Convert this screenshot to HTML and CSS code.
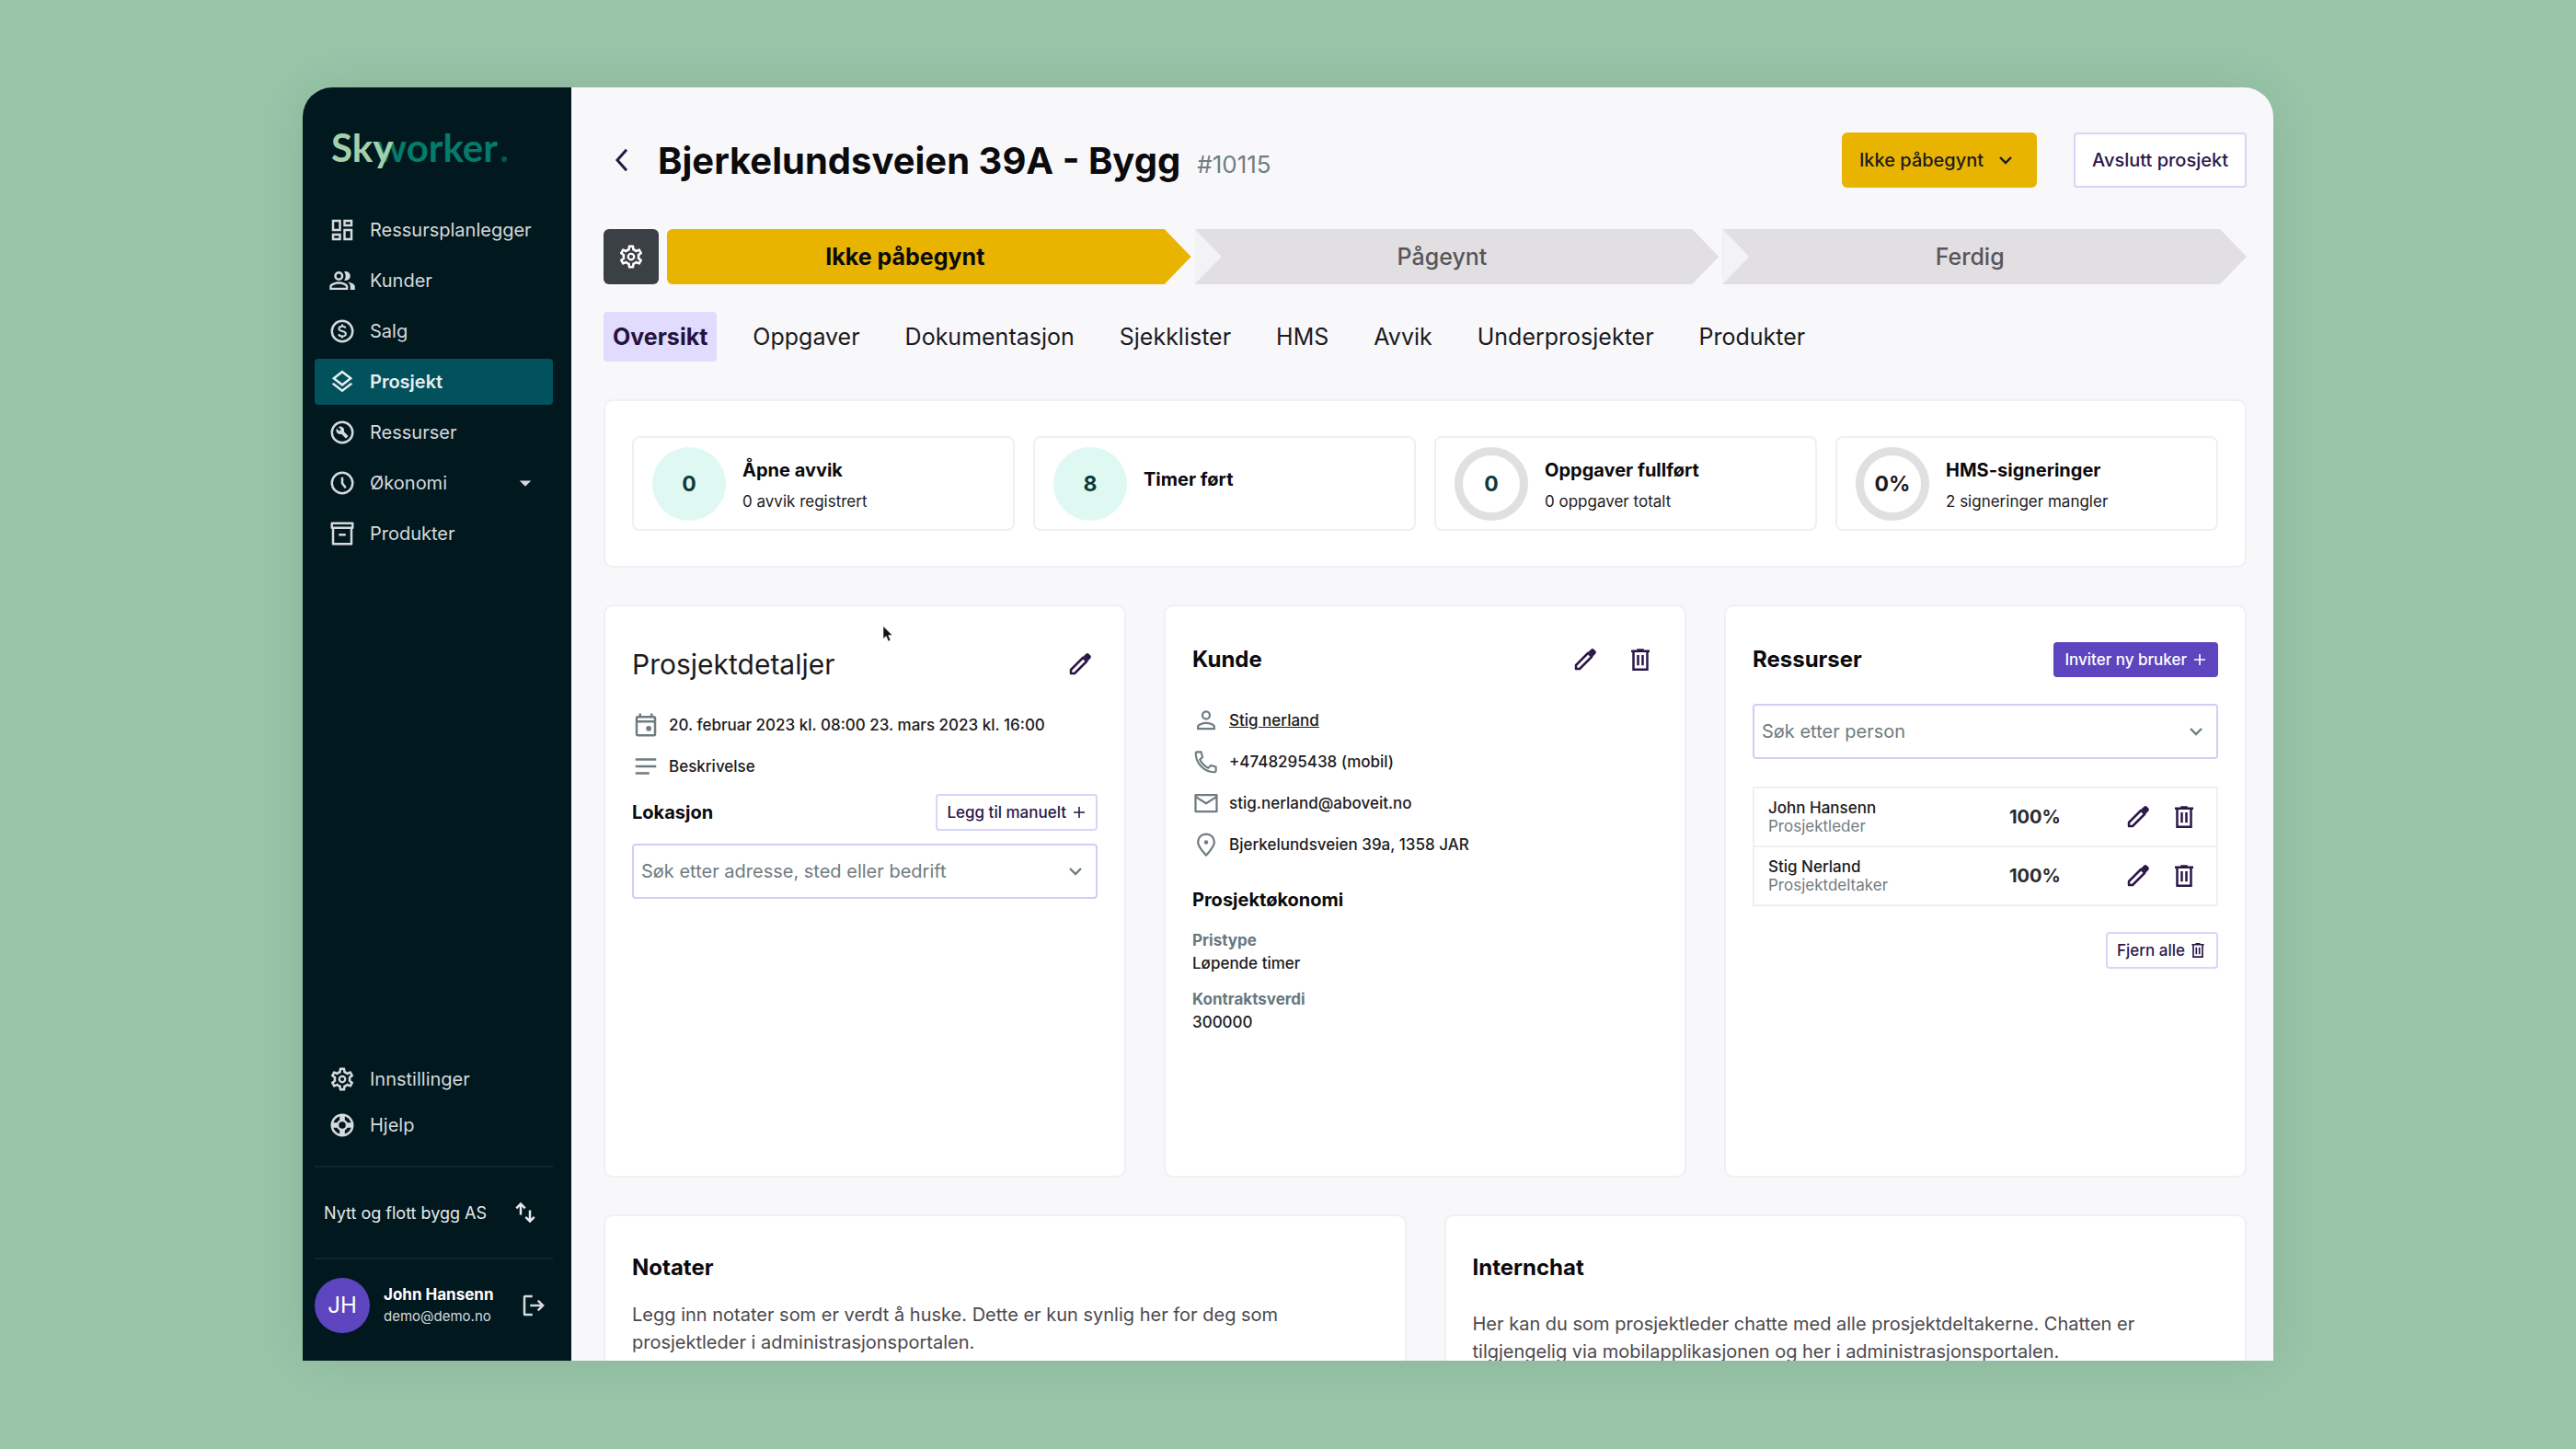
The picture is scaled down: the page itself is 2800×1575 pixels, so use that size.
FILE: index.html
```html
<!DOCTYPE html>
<html lang="no">
<head>
    <meta charset="UTF-8">
    <meta name="viewport" content="width=device-width, initial-scale=1.0">
    <title>Skyworker</title>
    <link rel="stylesheet" href="styles.css">
</head>
<body>
    <!-- Icon sprite -->
    <svg class="sprite" xmlns="http://www.w3.org/2000/svg">
        <symbol id="i-dashboard" viewBox="0 0 24 24"><path d="M19 5v2h-4V5h4M9 5v6H5V5h4m10 8v6h-4v-6h4M9 17v2H5v-2h4M21 3h-8v6h8V3zM11 3H3v10h8V3zm10 8h-8v10h8V11zm-10 4H3v6h8v-6z"/></symbol>
        <symbol id="i-people" viewBox="0 0 24 24"><path d="M9 4a4 4 0 1 0 0 8 4 4 0 0 0 0-8zm0 2a2 2 0 1 1 0 4 2 2 0 0 1 0-4zM9 13c-2.670 0-8 1.340-8 4v3h16v-3c0-2.660-5.330-4-8-4zm0 1.900c2.970 0 6.100 1.460 6.100 2.100v1.100H2.900V17c0-.64 3.130-2.100 6.100-2.100zM15 4c-.47 0-.91.08-1.330.23A5.950 5.950 0 0 1 15 8c0 1.430-.5 2.740-1.330 3.770.42.15.86.23 1.330.23a4 4 0 0 0 0-8zm1.670 9.130C18.040 14.060 19 15.320 19 17v3h4v-3c0-2.180-3.570-3.470-6.330-3.870z"/></symbol>
        <symbol id="i-dollar" viewBox="0 0 24 24"><g fill="none" stroke="currentColor" stroke-width="2"><circle cx="12" cy="12" r="9"/><path d="M15 9.200C14.500 8.200 13.400 7.700 12 7.700c-1.700 0-2.900.8-2.900 2.100 0 3 6 1.400 6 4.400 0 1.300-1.300 2.200-3.100 2.200-1.500 0-2.700-.6-3.200-1.800M12 6v2M12 16v2" stroke-width="1.600"/></g></symbol>
        <symbol id="i-layers" viewBox="0 0 24 24"><path d="M11.990 18.540l-7.370-5.730L3 14.070l9 7 9-7-1.630-1.270zM12 16l7.360-5.730L21 9l-9-7-9 7 1.630 1.270L12 16zm0-11.470L17.740 9 12 13.470 6.260 9 12 4.530z"/></symbol>
        <symbol id="i-wrench" viewBox="0 0 24 24"><circle cx="12" cy="12" r="9" fill="none" stroke="currentColor" stroke-width="2"/><path d="M13.490 11.380c.43-1.220.17-2.640-.81-3.620-1.110-1.110-2.790-1.300-4.100-.59l2.350 2.350-1.410 1.410-2.350-2.350c-.71 1.320-.52 2.990.59 4.100.98.98 2.400 1.240 3.620.81l3.410 3.410c.2.2.51.2.71 0l1.400-1.400c.2-.2.2-.51 0-.71l-3.410-3.410z"/></symbol>
        <symbol id="i-clock" viewBox="0 0 24 24"><g fill="none" stroke="currentColor" stroke-width="2"><circle cx="12" cy="12" r="9"/><path d="M12 7v5.200l3 4"/></g></symbol>
        <symbol id="i-box" viewBox="0 0 24 24"><g fill="none" stroke="currentColor" stroke-width="2" stroke-linejoin="round"><path d="M3 3h18v4H3zM4 7v14h16V7M9 13h6"/></g></symbol>
        <symbol id="i-gear" viewBox="0 0 24 24"><path d="M19.430 12.980c.04-.32.07-.64.07-.98 0-.34-.03-.66-.07-.98l2.110-1.650c.19-.15.24-.42.12-.64l-2-3.460c-.09-.16-.26-.25-.44-.25-.06 0-.12.01-.17.03l-2.490 1c-.52-.4-1.080-.73-1.690-.98l-.38-2.650C14.460 2.180 14.250 2 14 2h-4c-.25 0-.46.18-.49.42l-.38 2.650c-.61.25-1.170.59-1.690.98l-2.490-1c-.06-.02-.12-.03-.18-.03-.17 0-.34.09-.43.25l-2 3.460c-.13.22-.07.49.12.64l2.110 1.650c-.04.32-.07.65-.07.98 0 .33.03.66.07.98l-2.110 1.650c-.19.15-.24.42-.12.64l2 3.460c.09.16.26.25.44.25.06 0 .12-.01.17-.03l2.490-1c.52.4 1.080.73 1.690.98l.38 2.650c.03.24.24.42.49.42h4c.25 0 .46-.18.49-.42l.38-2.650c.61-.25 1.170-.59 1.690-.98l2.490 1c.06.02.12.03.18.03.17 0 .34-.09.43-.25l2-3.460c.12-.22.07-.49-.12-.64l-2.110-1.650zm-1.980-1.710c.04.31.05.52.05.73 0 .21-.02.43-.05.73l-.14 1.130.89.7 1.080.84-.7 1.210-1.270-.51-1.040-.42-.9.68c-.43.32-.84.56-1.250.73l-1.060.43-.16 1.130-.2 1.350h-1.400l-.19-1.350-.16-1.130-1.060-.43c-.43-.18-.83-.41-1.230-.71l-.91-.7-1.060.43-1.270.51-.7-1.210 1.080-.84.89-.7-.14-1.130c-.03-.31-.05-.54-.05-.74s.02-.43.05-.73l.14-1.130-.89-.7-1.080-.84.7-1.210 1.270.51 1.040.42.9-.68c.43-.32.84-.56 1.250-.73l1.060-.43.16-1.130.2-1.350h1.390l.19 1.350.16 1.130 1.060.43c.43.18.83.41 1.230.71l.91.7 1.060-.43 1.270-.51.7 1.210-1.070.85-.89.7.14 1.130zM12 8.500a3.500 3.500 0 1 0 0 7 3.500 3.500 0 0 0 0-7zm0 5.200a1.700 1.700 0 1 1 0-3.400 1.700 1.700 0 0 1 0 3.400z"/></symbol>
        <symbol id="i-help" viewBox="0 0 24 24"><g fill="none" stroke="currentColor"><circle cx="12" cy="12" r="9" stroke-width="2"/><circle cx="12" cy="12" r="4" stroke-width="2"/><path d="M12 3v5M12 16v5M3 12h5M16 12h5" stroke-width="4.500"/></g></symbol>
        <symbol id="i-swap" viewBox="0 0 24 24"><path d="M8 3L3.500 7.500l1.400 1.400L7 6.800V14h2V6.800l2.100 2.100 1.400-1.400zM17 17.200V10h-2v7.200l-2.100-2.100-1.400 1.400L16 21l4.500-4.500-1.400-1.400z"/></symbol>
        <symbol id="i-logout" viewBox="0 0 24 24"><path d="M11 3v2H5v14h6v2H4.500A1.500 1.500 0 0 1 3 19.500v-15A1.500 1.500 0 0 1 4.500 3zM16.500 7l5 5-5 5-1.400-1.400 2.600-2.600H9v-2h8.700l-2.600-2.600z"/></symbol>
        <symbol id="i-caret" viewBox="0 0 24 24"><path d="M7 10l5 5 5-5z"/></symbol>
        <symbol id="i-back" viewBox="0 0 24 24"><path d="M16 3l-8 9 8 9" fill="none" stroke="currentColor" stroke-width="2.400"/></symbol>
        <symbol id="i-chevron" viewBox="0 0 24 24"><path d="M6 9l6 6 6-6" fill="none" stroke="currentColor" stroke-width="2.400"/></symbol>
        <symbol id="i-edit" viewBox="0 0 24 24"><path d="M4 20v-3.200L14.600 6.200l3.200 3.200L7.200 20z" fill="none" stroke="currentColor" stroke-width="2" stroke-linejoin="round"/><path d="M15.600 5.200l1.700-1.700c.6-.6 1.500-.6 2.100 0l1.100 1.100c.6.6.6 1.500 0 2.100l-1.700 1.700z" stroke="currentColor"/></symbol>
        <symbol id="i-trash" viewBox="0 0 24 24"><g fill="none" stroke="currentColor" stroke-width="2"><path d="M4 4.500h16M9 3.500h6M6 5v15.500h12V5M10 8v9M14 8v9"/></g></symbol>
        <symbol id="i-calendar" viewBox="0 0 24 24"><path d="M19 4h-1V2h-2v2H8V2H6v2H5a2 2 0 0 0-2 2v14c0 1.100.9 2 2 2h14a2 2 0 0 0 2-2V6a2 2 0 0 0-2-2zm0 16H5V10h14v10zm0-12H5V6h14v2z"/><circle cx="14.500" cy="15" r="2.300"/></symbol>
        <symbol id="i-notes" viewBox="0 0 24 24"><path d="M3 5h18v2H3zM3 11h18v2H3zM3 17h12v2H3z"/></symbol>
        <symbol id="i-person" viewBox="0 0 24 24"><g fill="none" stroke="currentColor" stroke-width="1.800"><circle cx="12" cy="7.500" r="3.200"/><path d="M4.900 19.200v-1.700c0-1.900 4.500-3.300 7.100-3.300s7.100 1.400 7.100 3.300v1.700z"/></g></symbol>
        <symbol id="i-phone" viewBox="0 0 24 24"><path d="M4 3.500h3.600l1.300 4.300-2.300 2.400c1.600 3.100 4 5.600 7.200 7.200l2.400-2.300 4.300 1.300V20c0 .5-.4 1-1 1C10.500 21 3 13.500 3 4.500c0-.6.4-1 1-1z" fill="none" stroke="currentColor" stroke-width="1.700"/></symbol>
        <symbol id="i-mail" viewBox="0 0 24 24"><path d="M2.800 4.800h18.400v14.400H2.800zM3 6.500l9 5.700 9-5.700" fill="none" stroke="currentColor" stroke-width="1.800" stroke-linejoin="round"/></symbol>
        <symbol id="i-pin" viewBox="0 0 24 24"><path d="M12 2.800c-3.900 0-7.100 3-7.100 7 0 4.200 4.200 8.200 7.100 11.500 2.900-3.300 7.100-7.300 7.100-11.500 0-4-3.200-7-7.100-7z" fill="none" stroke="currentColor" stroke-width="1.800"/><circle cx="12" cy="10" r="1.800"/></symbol>
        <symbol id="i-plus" viewBox="0 0 24 24"><path d="M12 3v18M3 12h18" fill="none" stroke="currentColor" stroke-width="2.400"/></symbol>
    </svg>

    <div class="app">
        <aside class="sidebar">
            <div class="logo"><span class="logo-sky">Sky</span><span class="logo-worker">worker</span><span class="logo-dot"></span></div>
            <nav class="nav">
                <a href="#"><svg class="icon"><use href="#i-dashboard"/></svg>Ressursplanlegger</a>
                <a href="#"><svg class="icon"><use href="#i-people"/></svg>Kunder</a>
                <a href="#"><svg class="icon"><use href="#i-dollar"/></svg>Salg</a>
                <a href="#" class="active"><svg class="icon"><use href="#i-layers"/></svg>Prosjekt</a>
                <a href="#"><svg class="icon"><use href="#i-wrench"/></svg>Ressurser</a>
                <a href="#"><svg class="icon"><use href="#i-clock"/></svg>Økonomi<svg class="icon caret"><use href="#i-caret"/></svg></a>
                <a href="#"><svg class="icon"><use href="#i-box"/></svg>Produkter</a>
            </nav>
            <nav class="nav nav-bottom">
                <a href="#"><svg class="icon"><use href="#i-gear"/></svg>Innstillinger</a>
                <a href="#"><svg class="icon"><use href="#i-help"/></svg>Hjelp</a>
            </nav>
            <div class="company">
                <span>Nytt og flott bygg AS</span>
                <button class="icon-btn" aria-label="Bytt firma"><svg class="icon"><use href="#i-swap"/></svg></button>
            </div>
            <div class="user">
                <div class="avatar">JH</div>
                <div class="user-info">
                    <div class="user-name">John Hansenn</div>
                    <div class="user-mail">demo@demo.no</div>
                </div>
                <button class="icon-btn" aria-label="Logg ut"><svg class="icon"><use href="#i-logout"/></svg></button>
            </div>
        </aside>

        <main class="main">
            <header class="header">
                <button class="icon-btn back" aria-label="Tilbake"><svg class="icon"><use href="#i-back"/></svg></button>
                <h1>Bjerkelundsveien 39A - Bygg</h1>
                <span class="number">#10115</span>
                <button class="btn-status">Ikke påbegynt<svg class="icon-small"><use href="#i-chevron"/></svg></button>
                <button class="btn-outline">Avslutt prosjekt</button>
            </header>

            <div class="status-bar">
                <button class="step-settings" aria-label="Innstillinger"><svg class="icon"><use href="#i-gear"/></svg></button>
                <div class="steps">
                    <div class="step current">Ikke påbegynt</div>
                    <div class="step">Pågeynt</div>
                    <div class="step">Ferdig</div>
                </div>
            </div>

            <nav class="tabs">
                <a href="#" class="active">Oversikt</a>
                <a href="#">Oppgaver</a>
                <a href="#">Dokumentasjon</a>
                <a href="#">Sjekklister</a>
                <a href="#">HMS</a>
                <a href="#">Avvik</a>
                <a href="#">Underprosjekter</a>
                <a href="#">Produkter</a>
            </nav>

            <section class="card stats">
                <div class="stat">
                    <div class="circle">0</div>
                    <div><h3>Åpne avvik</h3><p>0 avvik registrert</p></div>
                </div>
                <div class="stat">
                    <div class="circle">8</div>
                    <div><h3>Timer ført</h3></div>
                </div>
                <div class="stat">
                    <div class="circle ring">0</div>
                    <div><h3>Oppgaver fullført</h3><p>0 oppgaver totalt</p></div>
                </div>
                <div class="stat">
                    <div class="circle ring dark">0%</div>
                    <div><h3>HMS-signeringer</h3><p>2 signeringer mangler</p></div>
                </div>
            </section>

            <div class="columns">
                <section class="card details">
                    <div class="card-head">
                        <h2 class="light">Prosjektdetaljer</h2>
                        <button class="icon-btn" aria-label="Rediger"><svg class="icon"><use href="#i-edit"/></svg></button>
                    </div>
                    <ul class="info">
                        <li><svg class="icon"><use href="#i-calendar"/></svg>20. februar 2023 kl. 08:00 23. mars 2023 kl. 16:00</li>
                        <li><svg class="icon"><use href="#i-notes"/></svg>Beskrivelse</li>
                    </ul>
                    <div class="location-row">
                        <label for="location">Lokasjon</label>
                        <button class="btn-small">Legg til manuelt<svg class="icon-plus"><use href="#i-plus"/></svg></button>
                    </div>
                    <div class="search">
                        <input type="text" id="location" placeholder="Søk etter adresse, sted eller bedrift">
                        <svg class="icon-small"><use href="#i-chevron"/></svg>
                    </div>
                </section>

                <section class="card customer">
                    <div class="card-head">
                        <h2>Kunde</h2>
                        <button class="icon-btn" aria-label="Rediger"><svg class="icon"><use href="#i-edit"/></svg></button>
                        <button class="icon-btn" aria-label="Slett"><svg class="icon"><use href="#i-trash"/></svg></button>
                    </div>
                    <ul class="info">
                        <li><svg class="icon"><use href="#i-person"/></svg><a href="#">Stig nerland</a></li>
                        <li><svg class="icon"><use href="#i-phone"/></svg>+4748295438 (mobil)</li>
                        <li><svg class="icon"><use href="#i-mail"/></svg>stig.nerland@aboveit.no</li>
                        <li><svg class="icon"><use href="#i-pin"/></svg>Bjerkelundsveien 39a, 1358 JAR</li>
                    </ul>
                    <h3>Prosjektøkonomi</h3>
                    <dl>
                        <dt>Pristype</dt>
                        <dd>Løpende timer</dd>
                        <dt>Kontraktsverdi</dt>
                        <dd>300000</dd>
                    </dl>
                </section>

                <section class="card resources">
                    <div class="card-head">
                        <h2>Ressurser</h2>
                        <button class="btn-small primary">Inviter ny bruker<svg class="icon-plus"><use href="#i-plus"/></svg></button>
                    </div>
                    <div class="search">
                        <input type="text" aria-label="Søk etter person" placeholder="Søk etter person">
                        <svg class="icon-small"><use href="#i-chevron"/></svg>
                    </div>
                    <table class="people">
                        <tr>
                            <td><div class="person">John Hansenn</div><div class="role">Prosjektleder</div></td>
                            <td class="percent">100%</td>
                            <td class="actions">
                                <div>
                                    <button class="icon-btn" aria-label="Rediger"><svg class="icon"><use href="#i-edit"/></svg></button>
                                    <button class="icon-btn" aria-label="Slett"><svg class="icon"><use href="#i-trash"/></svg></button>
                                </div>
                            </td>
                        </tr>
                        <tr>
                            <td><div class="person">Stig Nerland</div><div class="role">Prosjektdeltaker</div></td>
                            <td class="percent">100%</td>
                            <td class="actions">
                                <div>
                                    <button class="icon-btn" aria-label="Rediger"><svg class="icon"><use href="#i-edit"/></svg></button>
                                    <button class="icon-btn" aria-label="Slett"><svg class="icon"><use href="#i-trash"/></svg></button>
                                </div>
                            </td>
                        </tr>
                    </table>
                    <button class="btn-small remove-all">Fjern alle<svg class="icon-bin"><use href="#i-trash"/></svg></button>
                </section>
            </div>

            <div class="columns bottom">
                <section class="card">
                    <h2>Notater</h2>
                    <p>Legg inn notater som er verdt å huske. Dette er kun synlig her for deg som prosjektleder i administrasjonsportalen.</p>
                </section>
                <section class="card chat">
                    <h2>Internchat</h2>
                    <p>Her kan du som prosjektleder chatte med alle prosjektdeltakerne. Chatten er tilgjengelig via mobilapplikasjonen og her i administrasjonsportalen.</p>
                </section>
            </div>
        </main>
    </div>

    <!-- Mouse pointer -->
    <svg class="pointer" viewBox="0 0 12 19"><path d="M1 1v14l3.200-3 2.300 5.600 2.500-1-2.300-5.500H11z" fill="#111" stroke="#fff" stroke-width=".6"/></svg>
</body>
</html>
```
FILE: styles.css
```css
* {
    box-sizing: border-box;
}

body {
    margin: 0;
    height: 100vh;
    padding: 95px 329px 96px;
    background: #99c5a9;
    font-family: Inter, "Liberation Sans", sans-serif;
    font-size: 17px;
    color: #1c1a20;
    overflow: hidden;
}

h1, h2, h3, p, ul, dl, dd {
    margin: 0;
    padding: 0;
}

a {
    color: inherit;
    text-decoration: none;
}

button, input {
    font-family: inherit;
    color: inherit;
}

button {
    cursor: pointer;
    padding: 0;
    border: none;
    background: none;
}

.sprite {
    display: none;
}

.icon {
    display: block;
    width: 30px;
    height: 30px;
    flex: none;
    fill: currentColor;
}

.icon-small {
    width: 24px;
    height: 24px;
    flex: none;
}

.icon-plus {
    width: 16px;
    height: 16px;
}

.icon-bin {
    width: 20px;
    height: 20px;
}

.app {
    display: flex;
    height: 100%;
    border-radius: 32px 32px 0 0;
    overflow: hidden;
    background: #f8f8fb;
    box-shadow: 0 0 60px rgba(0, 40, 20, 0.1);
}

/* Sidebar */
.sidebar {
    display: flex;
    flex-direction: column;
    width: 292px;
    flex: none;
    padding: 38px 20px 30px 13px;
    background: #01181e;
    color: #d5dadd;
}

.logo {
    display: flex;
    align-items: baseline;
    margin-left: 18px;
    font-family: Lato, sans-serif;
    font-size: 42px;
    font-weight: 700;
    line-height: 54px;
}

/* The y is drawn over the start of the w */
.logo-sky {
    position: relative;
    color: #a3cfaa;
}

.logo-worker {
    margin-left: -19px;
    color: #047b6b;
}

.logo-dot {
    width: 6px;
    height: 6px;
    margin-left: 4px;
    border-radius: 50%;
    background: #04594f;
}

.nav {
    display: flex;
    flex-direction: column;
    gap: 5px;
    margin-top: 38px;
}

.nav a {
    display: flex;
    align-items: center;
    gap: 15px;
    height: 50px;
    padding: 0 15px;
    border-radius: 4px;
    font-size: 20px;
}

.nav a.active {
    background: #02525e;
    color: #e8eef0;
    font-weight: 600;
}

.nav .caret {
    margin-left: auto;
}

.nav-bottom {
    gap: 0;
    margin-top: auto;
}

.company {
    display: flex;
    align-items: center;
    justify-content: space-between;
    height: 102px;
    margin-top: 19px;
    padding: 0 15px 0 10px;
    border-top: 2px solid #0c252c;
    border-bottom: 2px solid #0c252c;
    color: #e4e9eb;
    font-size: 18px;
}

.user {
    display: flex;
    align-items: center;
    padding-top: 20px;
}

.avatar {
    width: 60px;
    height: 60px;
    border-radius: 50%;
    background: #5d45c0;
    color: #fff;
    font-size: 24px;
    line-height: 60px;
    text-align: center;
}

.user-info {
    flex: 1;
    margin-left: 15px;
}

.user-name {
    color: #fff;
    font-weight: 700;
    line-height: 24px;
}

.user-mail {
    font-size: 15px;
    line-height: 24px;
}

.user .icon-btn {
    margin-right: 6px;
}

/* Main */
.main {
    flex: 1;
    min-width: 0;
    padding: 49px 29px 0 35px;
}

.header {
    display: flex;
    align-items: center;
    height: 60px;
}

.back {
    margin: 0 24px 0 5px;
    color: #2b1748;
}

h1 {
    color: #0b0a0d;
    font-size: 40px;
    font-weight: 700;
}

.number {
    margin: 8px auto 0 18px;
    color: #737d80;
    font-size: 26px;
}

.btn-status {
    display: flex;
    align-items: center;
    gap: 12px;
    height: 60px;
    padding: 0 22px 0 19px;
    border-radius: 6px;
    background: #e8b400;
    font-size: 20px;
    font-weight: 500;
}

.btn-outline {
    height: 60px;
    margin-left: 40px;
    padding: 0 18px;
    border: 2px solid #dad4f8;
    border-radius: 4px;
    background: #fff;
    color: #2b1748;
    font-size: 20px;
    font-weight: 500;
}

.status-bar {
    display: flex;
    gap: 9px;
    margin-top: 45px;
}

.step-settings {
    width: 60px;
    height: 60px;
    padding: 15px;
    border-radius: 6px;
    background: #3b4045;
    color: #fff;
}

.steps {
    display: grid;
    grid-template-columns: repeat(3, 1fr);
    gap: 4px;
    flex: 1;
}

.step {
    position: relative;
    height: 60px;
    padding-right: 32px;
    background: #e1dfe2;
    color: #57555a;
    font-size: 25px;
    font-weight: 500;
    line-height: 60px;
    text-align: center;
    clip-path: polygon(0 0, calc(100% - 29px) 0, 100% 50%, calc(100% - 29px) 100%, 0 100%);
}

/* Light notch on the left side */
.step::before {
    content: "";
    position: absolute;
    top: 0;
    left: 0;
    width: 29px;
    height: 60px;
    background: #f3f2f5;
    clip-path: polygon(0 0, 100% 50%, 0 100%);
}

.step.current {
    padding-right: 52px;
    border-radius: 6px 0 0 6px;
    background: #e8b400;
    color: #0b0a0d;
    font-weight: 700;
}

.step.current::before {
    display: none;
}

.tabs {
    display: flex;
    gap: 29px;
    margin-top: 30px;
}

.tabs a {
    padding: 0 10px;
    border-radius: 4px;
    font-size: 25px;
    line-height: 54px;
}

.tabs a.active {
    background: #e1dbfd;
    color: #24123f;
    font-weight: 700;
}

.card {
    padding: 38px 29px;
    border: 2px solid #f1eff3;
    border-radius: 10px;
    background: #fff;
}

.stats {
    display: flex;
    gap: 20px;
    margin-top: 41px;
}

.stat {
    display: flex;
    flex: 1;
    align-items: center;
    gap: 18px;
    height: 103px;
    padding: 0 20px;
    border: 2px solid #f1eff3;
    border-radius: 8px;
}

.circle {
    display: flex;
    align-items: center;
    justify-content: center;
    width: 80px;
    height: 80px;
    border-radius: 50%;
    background: #dff9f2;
    color: #0e3b3a;
    font-size: 23px;
    font-weight: 700;
}

.circle.ring {
    border: 9px solid #e1dfe2;
    background: #fff;
}

.circle.dark {
    color: #1c1a20;
}

h3 {
    color: #0b0a0d;
    font-size: 20px;
    font-weight: 700;
    line-height: 28px;
}

.stat h3 {
    margin-bottom: 10px;
}

.stat p {
    line-height: 20px;
}

.columns {
    display: flex;
    gap: 41px;
    margin-top: 40px;
}

.columns .card {
    flex: 1;
    min-height: 623px;
}

.card-head {
    display: flex;
    align-items: center;
    gap: 30px;
    height: 40px;
}

.card-head h2 {
    margin-right: auto;
}

.card-head .icon-btn,
.actions .icon-btn {
    color: #2b1748;
}

.customer .card-head,
.details .card-head {
    padding-right: 4px;
}

.details .card-head {
    margin-top: 5px;
}

h2 {
    color: #0b0a0d;
    font-size: 24px;
    font-weight: 700;
    line-height: 36px;
}

h2.light {
    color: #1c1a20;
    font-size: 30px;
    font-weight: 400;
}

.info {
    list-style: none;
    margin-top: 23px;
}

.info li {
    display: flex;
    align-items: center;
    gap: 10px;
    height: 45px;
    font-weight: 500;
}

.info .icon {
    color: #6f7c80;
}

.info a {
    text-decoration: underline;
}

.location-row {
    display: flex;
    align-items: center;
    justify-content: space-between;
    margin-top: 8px;
}

.location-row label {
    color: #0b0a0d;
    font-size: 20px;
    font-weight: 700;
}

.btn-small {
    display: flex;
    align-items: center;
    gap: 6px;
    height: 40px;
    padding: 0 10px;
    border: 2px solid #dad4f8;
    border-radius: 4px;
    background: #fff;
    color: #2b1748;
    font-size: 17px;
    font-weight: 500;
}

.btn-small.primary {
    height: 38px;
    border-color: #5d45c0;
    background: #5d45c0;
    color: #fff;
}

.search {
    display: flex;
    align-items: center;
    height: 60px;
    margin-top: 14px;
    padding: 0 10px 0 8px;
    border: 2px solid #d3cdf3;
    border-radius: 4px;
    color: #6f7c80;
}

.search input {
    flex: 1;
    min-width: 0;
    padding: 0;
    border: none;
    outline: none;
    background: none;
    font-size: 20px;
}

.search input::placeholder {
    color: #6f7c80;
    opacity: 1;
}

.customer h3 {
    margin-top: 24px;
}

dl {
    margin-top: 18px;
    line-height: 25px;
}

dt {
    color: #66787f;
    font-weight: 700;
}

dd {
    margin-bottom: 14px;
    font-weight: 500;
}

.resources .search {
    margin-top: 28px;
}

.people {
    width: 100%;
    margin-top: 30px;
    border: 2px solid #f1eff3;
    border-collapse: collapse;
}

.people tr {
    height: 64px;
    border-bottom: 2px solid #f1eff3;
}

.people td {
    padding: 0 0 0 15px;
}

.person {
    font-weight: 500;
    line-height: 20px;
}

.role {
    color: #737d80;
    line-height: 20px;
}

.people .percent {
    width: 116px;
    padding: 0;
    color: #2b2a2e;
    font-size: 20px;
    font-weight: 700;
}

.people .actions {
    width: 110px;
    padding: 0 20px 0 0;
}

.actions div {
    display: flex;
    justify-content: flex-end;
    gap: 20px;
}

.remove-all {
    gap: 4px;
    margin: 28px 0 0 auto;
}

.bottom p {
    margin-top: 18px;
    max-width: 740px;
    color: #4b494e;
    font-size: 20px;
    line-height: 30px;
}

.bottom .chat p {
    margin-top: 28px;
}

.pointer {
    position: absolute;
    left: 959px;
    top: 679px;
    width: 12px;
    height: 20px;
}
```
